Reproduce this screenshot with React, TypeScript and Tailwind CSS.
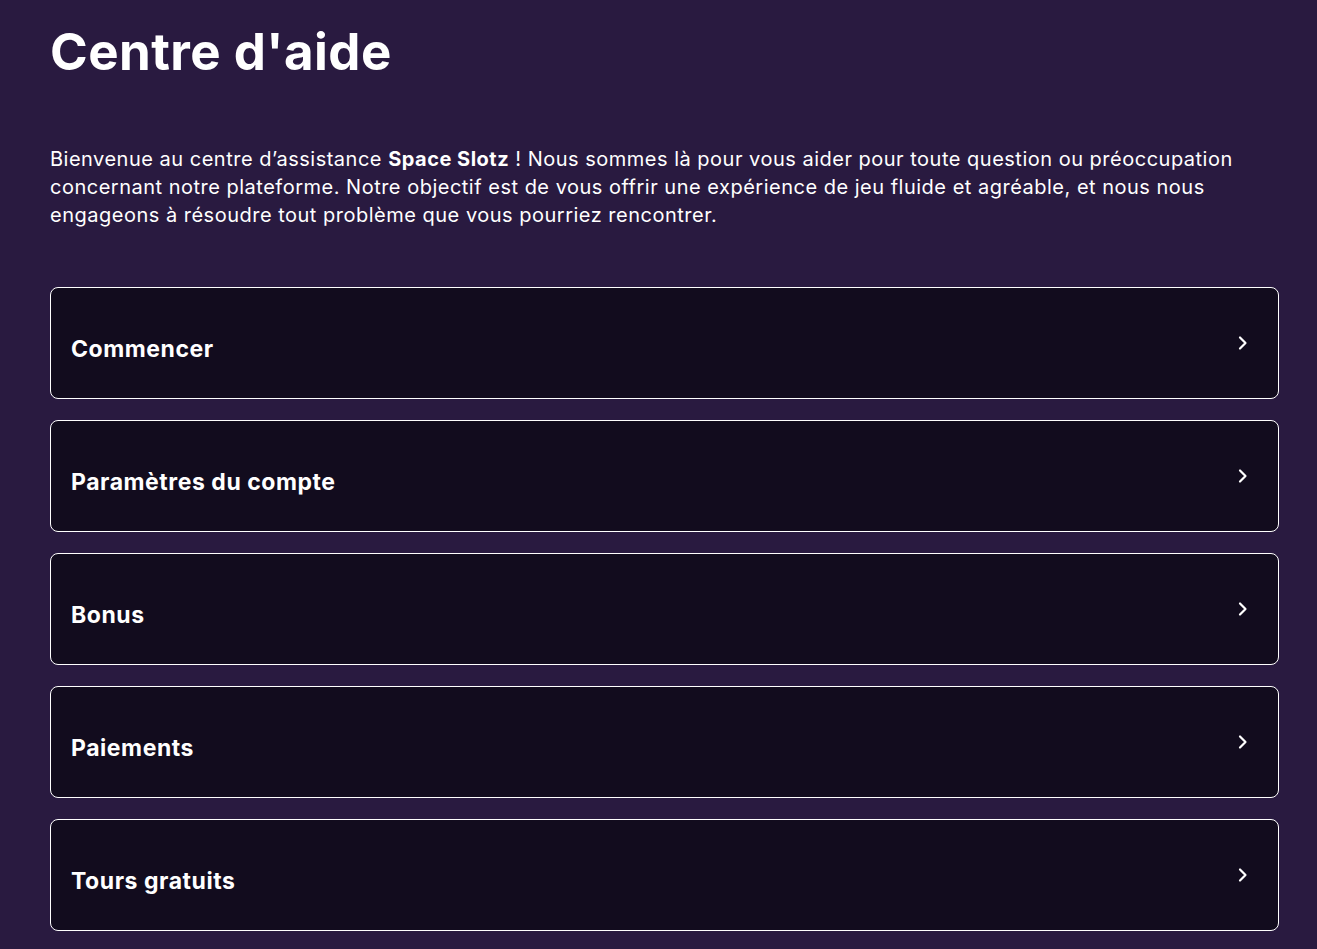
import React from 'react'

const sections = ['Commencer', 'Paramètres du compte', 'Bonus', 'Paiements', 'Tours gratuits']

const Chevron = () => (
  <svg width="14" height="16" viewBox="0 0 14 16" fill="none" className="shrink-0">
    <path d="M4 2.5 L9.5 8 L4 13.5" stroke="white" strokeWidth="2.2" strokeLinecap="round" strokeLinejoin="round" />
  </svg>
)

const HelpCenter = () => {
  return (
    <div className="min-h-screen w-full bg-[#291a40] text-white" style={{ fontFamily: 'Inter, "Noto Sans", sans-serif' }}>
      <div className="pl-[50px] pr-[38px] pt-[22px] pb-10">
        <h1 className="text-[51px] font-bold leading-[60px] tracking-[0.45px]">Centre d'aide</h1>

        <p className="mt-[63px] text-[20px] leading-[28px] tracking-[0.5px]">
          Bienvenue au centre d’assistance <span className="font-bold">Space Slotz</span> ! Nous sommes là pour vous aider pour toute question ou préoccupation concernant notre plateforme. Notre objectif est de vous offrir une expérience de jeu fluide et agréable, et nous nous engageons à résoudre tout problème que vous pourriez rencontrer.
        </p>

        <div className="mt-[58px] flex flex-col gap-[21px]">
          {sections.map((s) => (
            <div
              key={s}
              className="h-[112px] rounded-lg border border-white bg-[#120c1e] pl-[20px] pr-[28px] flex items-start justify-between cursor-pointer"
            >
              <span className="mt-[46px] text-[23px] font-bold leading-[30px] tracking-[0.55px]">{s}</span>
              <span className="mt-[47px]"><Chevron /></span>
            </div>
          ))}
        </div>
      </div>
    </div>
  )
}

export default function App() {
  return <HelpCenter />
}
